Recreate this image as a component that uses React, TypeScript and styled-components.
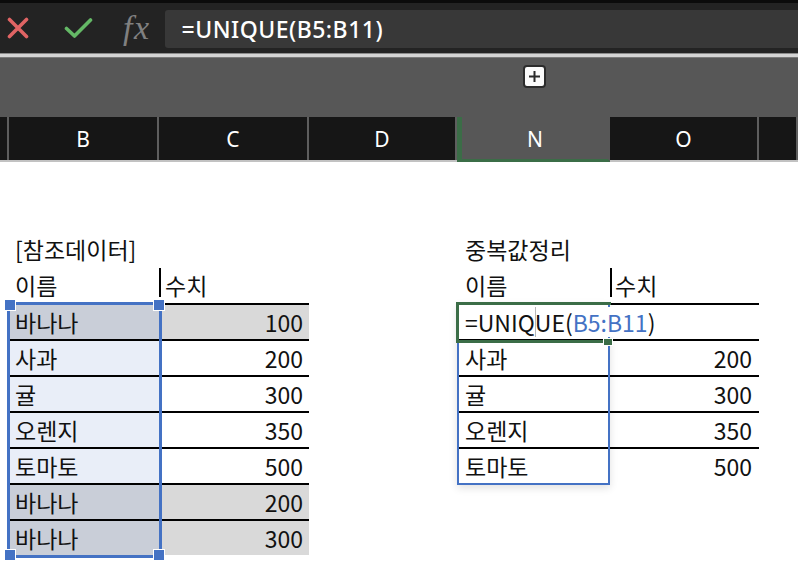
import styled, { createGlobalStyle } from 'styled-components'

const GlobalStyle = createGlobalStyle`
  html, body {
    margin: 0;
    padding: 0;
    background: #ffffff;
  }
  body {
    width: 798px;
    height: 578px;
    overflow: hidden;
    font-family: "Noto Sans", "Noto Sans CJK KR", sans-serif;
  }
  * {
    box-sizing: border-box;
  }
`

const SHEET_FONT = `"Noto Sans CJK KR", "Noto Sans", sans-serif`
const BLUE = '#4472c4'
const GREEN = '#3b6d47'

const FormulaBar = styled.div`
  display: flex;
  align-items: center;
  height: 53px;
  background: #232323;
  border-top: 3px solid #0b0b0b;
`

const BarIcon = styled.svg<{ $gap: number }>`
  flex: none;
  margin-left: ${({ $gap }) => $gap}px;
`

const FxLabel = styled.span`
  margin-left: 30px;
  font-family: "Liberation Serif", "DejaVu Serif", serif;
  font-style: italic;
  font-size: 34px;
  color: #808080;
  letter-spacing: 1.5px;
  line-height: 1;
`

const FormulaInput = styled.div`
  flex: 1;
  align-self: flex-start;
  margin-top: 7px;
  margin-left: 14px;
  height: 38px;
  padding-left: 17px;
  display: flex;
  align-items: center;
  background: #383838;
  border-radius: 3px 0 0 3px;
  color: #ffffff;
  font-size: 23px;
  font-weight: 500;
  letter-spacing: 0.5px;
`

const SplitLine = styled.div`
  height: 5px;
  background: #d4d4d4;
  border-top: 1px solid #8c8c8c;
  border-bottom: 1px solid #7a7a7a;
`

const GroupBand = styled.div`
  height: 59px;
  background: #575757;
  display: flex;
  justify-content: center;
  padding: 7px 0 0 270px;
`

const PlusButton = styled.div`
  width: 23px;
  height: 23px;
  border-radius: 4px;
  border: 2px solid #2c2c2c;
  background: #fbfbfb;
  display: flex;
  align-items: center;
  justify-content: center;
`

const sheetCols = '9px 150px 150px 148px 153px 149px 1fr'

const ColumnHeaders = styled.div`
  display: grid;
  grid-template-columns: ${sheetCols};
  height: 45px;
  background: #161616;
  border-bottom: 2px solid #c2c2c2;
`

const ColumnHeader = styled.div<{ $active?: boolean }>`
  display: flex;
  align-items: center;
  justify-content: center;
  color: #ffffff;
  font-size: 21px;
  border-right: 2px solid ${({ $active }) => ($active ? 'transparent' : '#5e5e5e')};
  background: ${({ $active }) => ($active ? '#575757' : 'transparent')};
  ${({ $active }) =>
    $active &&
    `
    border-left: 5px solid ${GREEN};
    border-bottom: 3px solid ${GREEN};
    margin-bottom: -2px;
    padding-top: 1px;
  `}
`

const Sheet = styled.div`
  display: flex;
  padding-top: 69px;
  font-family: ${SHEET_FONT};
  font-size: 23px;
  color: #111111;
`

const Gap = styled.div<{ $w: number }>`
  flex: none;
  width: ${({ $w }) => $w}px;
`

const TableBlock = styled.div<{ $w: number }>`
  flex: none;
  width: ${({ $w }) => $w}px;
`

const TitleRow = styled.div<{ $pad: number }>`
  height: 36px;
  display: flex;
  align-items: center;
  padding-left: ${({ $pad }) => $pad}px;
  line-height: 1;
`

const Row = styled.div<{ $cols: string; $last?: boolean }>`
  display: grid;
  grid-template-columns: ${({ $cols }) => $cols};
  height: 36px;
  border-bottom: 2px solid ${({ $last }) => ($last ? 'transparent' : '#000000')};
`

const HeadRow = styled(Row)`
  height: 38px;
`

const Cell = styled.div<{ $bg?: string; $pad: number; $right?: boolean; $divider?: boolean }>`
  position: relative;
  display: flex;
  align-items: center;
  justify-content: ${({ $right }) => ($right ? 'flex-end' : 'flex-start')};
  padding: 0 ${({ $pad }) => $pad}px;
  background: ${({ $bg }) => $bg || 'transparent'};
  white-space: nowrap;
  line-height: 1;
  ${({ $divider }) =>
    $divider &&
    `
    &::before {
      content: '';
      position: absolute;
      left: 0;
      top: 1px;
      bottom: 6px;
      width: 2px;
      background: #000;
    }
  `}
`

const EditCell = styled(Cell)`
  z-index: 2;
  padding-left: 4px;
`

const Editor = styled.span`
  display: inline-flex;
  align-items: center;
  height: 30px;
  padding: 0 6px 0 4px;
  background: #ffffff;
`

const Body = styled.div`
  position: relative;
`

const SelectionFrame = styled.div`
  position: absolute;
  top: -3px;
  left: -2px;
  width: 155px;
  bottom: -1px;
  border: 3px solid ${BLUE};
  pointer-events: none;
`

const Handle = styled.span<{ $x: 'left' | 'right'; $y: 'top' | 'bottom' }>`
  position: absolute;
  ${({ $x }) => $x}: -6px;
  ${({ $y }) => $y}: -6px;
  width: 12px;
  height: 12px;
  background: ${BLUE};
  border: 1.5px solid #ffffff;
`

const SpillFrame = styled.div`
  position: absolute;
  top: -2px;
  left: 0;
  width: 153px;
  height: 182px;
  border: 2px solid ${BLUE};
  box-shadow: 0 3px 8px rgba(0, 0, 0, 0.12);
  pointer-events: none;
`

const ActiveCell = styled.div`
  position: absolute;
  top: -3px;
  left: -1px;
  width: 155px;
  height: 41px;
  border: 3.5px solid ${GREEN};
  border-right: none;
  pointer-events: none;
`

const FillHandle = styled.span`
  position: absolute;
  right: -2px;
  bottom: -6px;
  width: 10px;
  height: 8px;
  background: ${GREEN};
  border: 1px solid #ffffff;
`

const RefText = styled.span`
  color: ${BLUE};
`

const Caret = styled.span`
  display: inline-block;
  width: 1px;
  height: 30px;
  margin-right: -1px;
  background: #b8b8b8;
`

type Item = { name: string; value: number; dup?: boolean }

const sourceRows: Item[] = [
  { name: '바나나', value: 100, dup: true },
  { name: '사과', value: 200 },
  { name: '귤', value: 300 },
  { name: '오렌지', value: 350 },
  { name: '토마토', value: 500 },
  { name: '바나나', value: 200, dup: true },
  { name: '바나나', value: 300, dup: true },
]

const uniqueRows: Item[] = [
  { name: '사과', value: 200 },
  { name: '귤', value: 300 },
  { name: '오렌지', value: 350 },
  { name: '토마토', value: 500 },
]

const columns = ['', 'B', 'C', 'D', 'N', 'O', '']

const App = () => {
  const leftCols = '150px 150px'
  const rightCols = '153px 149px'

  return (
    <>
      <GlobalStyle />
      <FormulaBar>
        <BarIcon $gap={7} width="22" height="22" viewBox="0 0 22 22">
          <path d="M2.5 2.5 L19.5 19.5 M19.5 2.5 L2.5 19.5" stroke="#e06464" strokeWidth="3.6" strokeLinecap="round" />
        </BarIcon>
        <BarIcon $gap={35} width="29" height="22" viewBox="0 0 29 22">
          <path d="M2.5 11.5 L10.5 19 L26.5 3" stroke="#64b866" strokeWidth="3.6" strokeLinecap="round" strokeLinejoin="round" fill="none" />
        </BarIcon>
        <FxLabel>fx</FxLabel>
        <FormulaInput>=UNIQUE(B5:B11)</FormulaInput>
      </FormulaBar>
      <SplitLine />
      <GroupBand>
        <PlusButton>
          <svg width="13" height="13" viewBox="0 0 13 13">
            <path d="M6.5 1 V12 M1 6.5 H12" stroke="#2a2a2a" strokeWidth="2" />
          </svg>
        </PlusButton>
      </GroupBand>
      <ColumnHeaders>
        {columns.map((c, i) => (
          <ColumnHeader key={i} $active={c === 'N'}>
            {c}
          </ColumnHeader>
        ))}
      </ColumnHeaders>
      <Sheet>
        <Gap $w={9} />
        <TableBlock $w={300}>
          <TitleRow $pad={6}>[참조데이터]</TitleRow>
          <HeadRow $cols={leftCols}>
            <Cell $pad={6}>이름</Cell>
            <Cell $pad={6} $divider>수치</Cell>
          </HeadRow>
          <Body>
            {sourceRows.map((r, i) => (
              <Row key={i} $cols={leftCols} $last={i === sourceRows.length - 1}>
                <Cell $pad={6} $bg={r.dup ? '#c9ced8' : '#e9eef8'}>{r.name}</Cell>
                <Cell $pad={6} $right $bg={r.dup ? '#d9d9d9' : '#ffffff'}>{r.value}</Cell>
              </Row>
            ))}
            <SelectionFrame>
              <Handle $x="left" $y="top" />
              <Handle $x="right" $y="top" />
              <Handle $x="left" $y="bottom" />
              <Handle $x="right" $y="bottom" />
            </SelectionFrame>
          </Body>
        </TableBlock>
        <Gap $w={148} />
        <TableBlock $w={302}>
          <TitleRow $pad={8}>중복값정리</TitleRow>
          <HeadRow $cols={rightCols}>
            <Cell $pad={8}>이름</Cell>
            <Cell $pad={5} $divider>수치</Cell>
          </HeadRow>
          <Body>
            <Row $cols={rightCols}>
              <EditCell $pad={8}>
                <Editor>
                  =UNIQ<Caret />UE(<RefText>B5:B11</RefText>)
                </Editor>
              </EditCell>
              <Cell $pad={7} $right />
            </Row>
            {uniqueRows.map((r, i) => (
              <Row key={i} $cols={rightCols} $last={i === uniqueRows.length - 1}>
                <Cell $pad={8}>{r.name}</Cell>
                <Cell $pad={7} $right>{r.value}</Cell>
              </Row>
            ))}
            <SpillFrame />
            <ActiveCell>
              <FillHandle />
            </ActiveCell>
          </Body>
        </TableBlock>
      </Sheet>
    </>
  )
}

export default App
